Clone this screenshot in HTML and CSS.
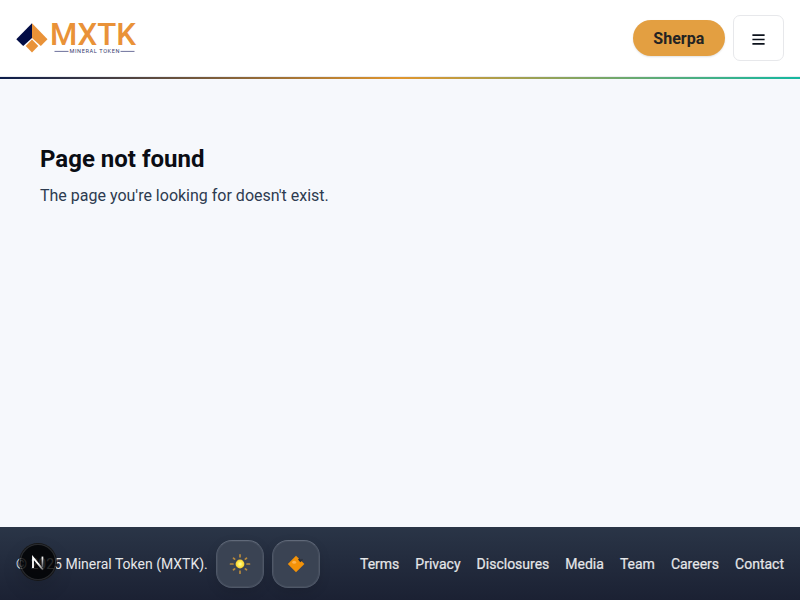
FILE: index.html
```html
<!DOCTYPE html>
<html lang="en">
<head>
<meta charset="utf-8">
<title>MXTK</title>
<link rel="stylesheet" href="styles.css">
</head>
<body>
<header class="header">
  <a class="logo" aria-label="MXTK Mineral Token">
    <svg width="120" height="32" viewBox="0 0 120 32">
      <path fill="#020c45" d="M16 1.2V16L7.2 24 0.3 17.2z"/>
      <path fill="#e99238" d="M16 1.2 31.5 17.2 24.8 24 16 16z"/>
      <path fill="#e99238" d="M16 17.5 22.3 24 16 30.4 9.7 24z"/>
      <text class="logo-name" x="34" y="23.1" textLength="86" lengthAdjust="spacingAndGlyphs">MXTK</text>
      <text class="logo-sub" x="53.5" y="31.3" textLength="50" lengthAdjust="spacing">MINERAL TOKEN</text>
      <path stroke="#5c6190" stroke-width=".9" d="M38.5 29.4H52.5M104.5 29.4H118.5"/>
    </svg>
  </a>
  <div class="actions">
    <button class="sherpa">Sherpa</button>
    <button class="menu" aria-label="Menu">
      <svg width="13" height="11" viewBox="0 0 13 11"><path stroke="#0c121c" stroke-width="1.7" d="M.4 1.2H12.6M.4 5.5H12.6M.4 9.8H12.6"/></svg>
    </button>
  </div>
</header>
<div class="rule"></div>
<main class="main">
  <h1>Page not found</h1>
  <p>The page you're looking for doesn't exist.</p>
</main>
<footer class="footer">
  <span class="copy">© 2025 Mineral Token (MXTK).</span>
  <button class="tool" aria-label="Theme">
    <svg width="24" height="24" viewBox="0 0 24 24">
      <defs><radialGradient id="sun"><stop offset="0" stop-color="#fffbb0"/><stop offset=".5" stop-color="#ffee50"/><stop offset="1" stop-color="#f9cc2c"/></radialGradient></defs>
      <path stroke="#b98a3b" stroke-width="1.7" stroke-linecap="round" d="M12 2.8V4.8M12 19.2V21.2M2.5 12H5M19 12H21.5M5.5 6.2 6.7 7.1M17.3 7.1 18.5 6.2M5.5 17.8 6.7 16.9M17.3 16.9 18.5 17.8"/>
      <circle cx="12" cy="12" r="4.4" fill="url(#sun)"/>
    </svg>
  </button>
  <button class="tool" aria-label="Mineral">
    <svg width="24" height="24" viewBox="0 0 24 24">
      <path fill="#f39208" d="M12 3.8 20.4 12 12 20.2 3.8 12z"/>
      <ellipse cx="10.2" cy="10.3" rx="2" ry="1.5" fill="#ffb34b"/>
      <path fill="#2b303a" d="M14 7.5 15.3 6.2 17 7.8 18 6.8 19 7.8 16.3 10.2z"/>
    </svg>
  </button>
  <nav class="links"><a>Terms</a><a>Privacy</a><a>Disclosures</a><a>Media</a><a>Team</a><a>Careers</a><a>Contact</a></nav>
</footer>
<div class="badge">
  <svg width="36" height="36" viewBox="0 0 36 36">
    <defs>
      <linearGradient id="diag" gradientUnits="userSpaceOnUse" x1="18" y1="20" x2="25" y2="28"><stop stop-color="#fff"/><stop offset="1" stop-color="#fff" stop-opacity="0"/></linearGradient>
      <linearGradient id="stem" x1="0" y1="0" x2="0" y2="1"><stop stop-color="#fff"/><stop offset="1" stop-color="#fff" stop-opacity=".3"/></linearGradient>
    </defs>
    <path fill="none" stroke="url(#diag)" stroke-width="1.8" d="M13 24V13.6L23 25.7"/>
    <rect x="21.6" y="12.6" width="1.7" height="10.6" fill="url(#stem)"/>
  </svg>
</div>
</body>
</html>
```
FILE: styles.css
```css
* { box-sizing: border-box; }
body {
  margin: 0;
  height: 600px;
  display: flex;
  flex-direction: column;
  overflow: hidden;
  background: #f6f8fc;
  font-family: Roboto, "Liberation Sans", sans-serif;
}
button { font: inherit; padding: 0; }
.header {
  height: 77px;
  flex: none;
  display: flex;
  justify-content: space-between;
  align-items: center;
  padding: 0 16px 1px;
  border-bottom: 1px solid #ebedf1;
  background: #fff;
}
.logo svg { display: block; overflow: visible; }
.logo-name { font-size: 32px; line-height: 1; font-weight: 500; fill: #e99238; }
.logo-sub { font-size: 5.6px; line-height: 1; font-weight: 400; fill: #353b70; }
.actions { display: flex; align-items: center; gap: 8px; }
.sherpa {
  width: 91.5px;
  height: 36px;
  padding-top: 2px;
  border: 0;
  border-radius: 18px;
  background: #e39f41;
  color: #232323;
  font-weight: 700;
  font-size: 16px;
  box-shadow: 0 1px 2px rgba(0, 0, 0, .12);
}
.menu {
  width: 51.5px;
  height: 46px;
  display: flex;
  align-items: center;
  justify-content: center;
  padding-top: 4px;
  border: 1px solid #e7e8eb;
  border-radius: 7px;
  background: #fff;
}
.rule {
  height: 2px;
  flex: none;
  background: linear-gradient(90deg, #0b1c4a, #e0962e 50%, #14b8a0);
}
.main { flex: 1; padding: 64px 40px 0; }
.main h1 {
  margin: 0;
  font-size: 24px;
  line-height: 32px;
  font-weight: 700;
  color: #0a0d14;
}
.main p {
  margin: 8px 0 0;
  font-size: 16px;
  line-height: 26px;
  color: #2d3b50;
}
.footer {
  height: 73px;
  flex: none;
  display: flex;
  align-items: center;
  gap: 8px;
  padding: 1px 16px 0;
  background: linear-gradient(#2a3547, #1b2133);
  color: #e6e7e9;
  font-size: 14px;
  white-space: nowrap;
}
.copy { width: 192px; }
.tool {
  width: 48px;
  height: 48px;
  display: flex;
  align-items: center;
  justify-content: center;
  border: 1px solid #4f5868;
  border-top-color: #606979;
  border-radius: 16px;
  background: #3a4353;
  box-shadow: inset 0 0 0 1px rgba(255, 255, 255, .05), 0 4px 12px rgba(0, 0, 0, .1);
}
.links {
  display: flex;
  gap: 16px;
  margin-left: auto;
  -webkit-text-stroke: .2px currentColor;
}
.badge {
  position: absolute;
  left: 20px;
  top: 544px;
  width: 36px;
  height: 36px;
  border-radius: 50%;
  background: rgba(0, 0, 0, .82);
  box-shadow: 0 0 0 1px #171717, inset 0 0 0 1px rgba(255, 255, 255, .14), 0 8px 20px rgba(0, 0, 0, .12);
}
.badge svg { display: block; }
```
